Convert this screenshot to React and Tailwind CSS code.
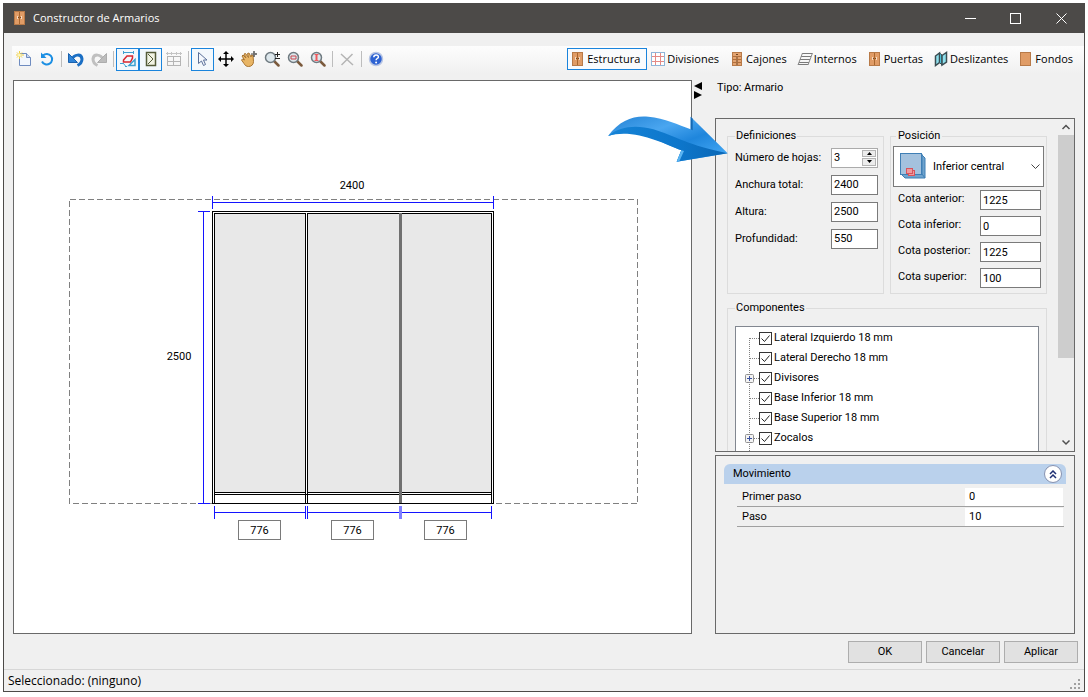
import { useState } from "react";

const tabs = [
  { id: "estructura", label: "Estructura", icon: WardrobeIcon },
  { id: "divisiones", label: "Divisiones", icon: GridIcon },
  { id: "cajones", label: "Cajones", icon: DrawersIcon },
  { id: "internos", label: "Internos", icon: ShelvesIcon },
  { id: "puertas", label: "Puertas", icon: WardrobeIcon },
  { id: "deslizantes", label: "Deslizantes", icon: SlidingIcon },
  { id: "fondos", label: "Fondos", icon: BackIcon },
];

const cotas = [
  { id: "anterior", label: "Cota anterior:", value: "1225" },
  { id: "inferior", label: "Cota inferior:", value: "0" },
  { id: "posterior", label: "Cota posterior:", value: "1225" },
  { id: "superior", label: "Cota superior:", value: "100" },
];

const componentes = [
  { label: "Lateral Izquierdo 18 mm" },
  { label: "Lateral Derecho 18 mm" },
  { label: "Divisores", expandable: true },
  { label: "Base Inferior 18 mm" },
  { label: "Base Superior 18 mm" },
  { label: "Zocalos", expandable: true },
];

/* ICONS */

function Icon({ children }) {
  return (
    <svg width="16" height="16" viewBox="0 0 16 16" fill="none" className="shrink-0">
      {children}
    </svg>
  );
}

function WardrobeIcon() {
  return (
    <Icon>
      <rect x="2.5" y="1.5" width="10" height="13" fill="#e09c66" stroke="#b87a48" />
      <path d="M7.500 2v12" stroke="#a9672f" />
      <path d="M5.500 6v3M9.500 6v3" stroke="#f4dcc4" />
      <path d="M6 7.500h3" stroke="#7d4a20" strokeDasharray="1 1" />
    </Icon>
  );
}

function GridIcon() {
  return (
    <Icon>
      <rect x="1.5" y="1.5" width="13" height="13" fill="#fff" stroke="#8fb6d9" />
      <path d="M5.500 2v12M10.500 2v12M2 5.500h12M2 10.500h12" stroke="#e58a86" />
    </Icon>
  );
}

function DrawersIcon() {
  return (
    <Icon>
      <rect x="3.5" y="1.5" width="9" height="13" fill="#e3a472" stroke="#b87a48" />
      <path d="M4 5.500h8M4 8.500h8M4 11.500h8" stroke="#b06f3c" />
      <path d="M7 3.500h2M7 7h2M7 10h2M7 13h2" stroke="#6d4422" />
    </Icon>
  );
}

function ShelvesIcon() {
  return (
    <Icon>
      <path d="M5 2.500h10M4 5.500h10M3 8.500h10M2 11.500h10M1 13.500h10" stroke="#7a7a7a" />
      <path d="M5.500 2L1 14M15.500 2L11 14" stroke="#8a8a8a" />
    </Icon>
  );
}

function SlidingIcon() {
  return (
    <Icon>
      <path d="M2.500 5l4-3v9.500l-4 3z" fill="#8fe0ee" stroke="#3b4d52" strokeWidth="1.500" />
      <path d="M6.500 2l2.500 2v10l-2.500-2.500z" fill="#4cbfd6" stroke="#3b4d52" />
      <path d="M9 4.500l4.500-3v9.500L9 14z" fill="#8fe0ee" stroke="#3b4d52" strokeWidth="1.500" />
    </Icon>
  );
}

function BackIcon() {
  return (
    <Icon>
      <rect x="2.500" y="1.500" width="10" height="13" fill="#e09c66" stroke="#b87a48" />
    </Icon>
  );
}

function NewIcon() {
  return (
    <Icon>
      <path d="M3.500 2.500h7l4 4v8h-11z" fill="#f3f7fd" stroke="#6f8cc0" />
      <path d="M10.500 2.500v4h4" fill="#c9d6ee" stroke="#6f8cc0" />
      <path d="M3.500 0v8M0 4h8M1 1.500l5 5M6 1.500l-5 5" stroke="#efcf45" />
      <circle cx="3.500" cy="4" r="1.500" fill="#fff8c0" />
    </Icon>
  );
}

function RefreshIcon() {
  return (
    <Icon>
      <path d="M4 4.500A5.300 5.300 0 1 1 3 10.500" stroke="#1c8fe3" strokeWidth="2" />
      <path d="M2 1.500V7h5.500z" fill="#1c8fe3" />
    </Icon>
  );
}

function UndoIcon() {
  return (
    <Icon>
      <path d="M4 8.500C6 3 13.500 2.500 14 8c0 2.500-1.500 5-4.500 6.500" stroke="#1b6fc4" strokeWidth="3" />
      <path d="M.5 2.500v9h9z" fill="#2f84d8" stroke="#1c62ad" />
    </Icon>
  );
}

function RedoIcon() {
  return (
    <Icon>
      <path d="M12 8.500C10 3 2.500 2.500 2 8c0 2.500 1.500 5 4.500 6.500" stroke="#c0c0c0" strokeWidth="3" />
      <path d="M15.500 2.500v9h-9z" fill="#bdbdbd" stroke="#adadad" />
    </Icon>
  );
}

function DimensionsIcon() {
  return (
    <Icon>
      <path d="M3.500 0v3M13.500 0v3M4 1.500h9" stroke="#3da0d0" />
      <path d="M7 5h5.500v2l-2 4H3.500V9z" stroke="#d8262f" strokeWidth="1.500" />
      <path d="M0 12.500h3M3 12l3 3.500M5 15.500h2" stroke="#3da0d0" />
      <path d="M9 14.500l6-6v6z" stroke="#3da0d0" strokeWidth="1.500" />
    </Icon>
  );
}

function DoorIcon() {
  return (
    <Icon>
      <rect x="3.500" y="1.500" width="9" height="13" fill="#f2f4e4" stroke="#555c3a" strokeWidth="1.500" />
      <path d="M5 3l5 5-5 5" stroke="#555c3a" />
    </Icon>
  );
}

function LayoutIcon() {
  return (
    <Icon>
      <path d="M0 2.500h16M1.500 1v3M5.500 1v3M10.500 1v3M14.500 1v3" stroke="#c4c4c4" />
      <rect x="1.500" y="5.500" width="13" height="9" stroke="#b4b4b4" />
      <path d="M7.500 5v10M2 10.500h12" stroke="#b4b4b4" />
    </Icon>
  );
}

function CursorIcon() {
  return (
    <Icon>
      <path
        d="M3.500 1.500v11l3-2.500 2 4.500 2-1-2-4.500h3.500z"
        fill="#f4f8fd"
        stroke="#5b7099"
      />
    </Icon>
  );
}

function MoveIcon() {
  return (
    <Icon>
      <path d="M8 2v12M2 8h12" stroke="#000" strokeWidth="1.500" />
      <path d="M8 0l3 3H5zM8 16l3-3H5zM0 8l3-3v6zM16 8l-3-3v6z" fill="#000" />
    </Icon>
  );
}

function HandIcon() {
  return (
    <Icon>
      <path
        d="M1 5l1-1 3 3-2-4 1.500-.5 3 4-1-4 1.500-.5 2 4 .5-2 1.500.5.5 6c0 3-2 5-5 5-2 0-3.500-1-4.500-3L.5 9l1-1 2 1z"
        fill="#e8b565"
        stroke="#a87432"
      />
      <path d="M13 0v6M10 3h6" stroke="#444" />
      <path d="M13 0l1 1.500h-2zM13 6l1-1.500h-2zM16 3l-1.500-1v2z" fill="#444" />
    </Icon>
  );
}

function Magnifier({ children }) {
  return (
    <Icon>
      <path d="M10 10l4.500 4.500" stroke="#7b5a3c" strokeWidth="2.500" strokeLinecap="round" />
      <circle cx="6.500" cy="6.500" r="5" fill="#dde7ec" stroke="#6f7a80" strokeWidth="1.500" />
      {children}
    </Icon>
  );
}

function ZoomIcon() {
  return (
    <Magnifier>
      <path d="M11 3.500h5M13.500 1v5M11 7.500h5" stroke="#222" />
    </Magnifier>
  );
}

function ZoomWindowIcon() {
  return (
    <Magnifier>
      <path d="M4 5h5v3H4z" stroke="#c8474e" />
    </Magnifier>
  );
}

function ZoomExtentsIcon() {
  return (
    <Magnifier>
      <path d="M6.500 3v7" stroke="#ef5a5e" strokeWidth="2" />
      <path d="M4.500 3.500h4M4.500 9.500h4" stroke="#ef5a5e" />
    </Magnifier>
  );
}

function DeleteIcon() {
  return (
    <Icon>
      <path d="M2 3l12 11M13.500 3L2.500 14" stroke="#b4b4b4" strokeWidth="1.500" />
    </Icon>
  );
}

function HelpIcon() {
  return (
    <Icon>
      <circle cx="8" cy="8" r="6.500" fill="#2d62d2" stroke="#b9c6e4" strokeWidth="1.500" />
      <path d="M5.800 6.200c0-3 4.600-2.800 4.600-.3 0 1.600-2.300 1.600-2.300 3.300" stroke="#fff" strokeWidth="1.500" />
      <circle cx="8.100" cy="11.500" r="1" fill="#fff" />
    </Icon>
  );
}

function PositionIcon() {
  return (
    <svg width="26" height="28" viewBox="0 0 26 28" fill="none">
      <path d="M1 22l4 4h20V6l-4-4z" fill="#6fa3cd" stroke="#3f7fb5" />
      <path d="M22 2v20H1M22 22l3 4" stroke="#3f7fb5" />
      <rect x=".5" y="1.500" width="21" height="21" fill="#a4c2de" stroke="#3f7fb5" />
      <rect x="8.500" y="18.500" width="6" height="5" fill="#ee9a9f" stroke="#d8535b" />
      <rect x="6.500" y="16.500" width="6" height="5" fill="#ee9a9f" stroke="#d8535b" />
    </svg>
  );
}

/* TITLE BAR */

function TitleBar() {
  return (
    <header className="flex h-[30px] shrink-0 items-center bg-[#4c4a48] pl-2 text-white">
      <WardrobeIcon />
      <h1 className="ml-[5px] flex-1 font-['Open_Sans',sans-serif] text-[11px]">
        Constructor de Armarios
      </h1>
      <button type="button" aria-label="Minimizar" className="flex h-full w-[45px] items-center justify-center">
        <svg width="11" height="11" viewBox="0 0 11 11" stroke="#fff">
          <path d="M0 5.500h11" />
        </svg>
      </button>
      <button type="button" aria-label="Maximizar" className="flex h-full w-[45px] items-center justify-center">
        <svg width="11" height="11" viewBox="0 0 11 11" fill="none" stroke="#fff">
          <rect x=".5" y=".5" width="10" height="10" />
        </svg>
      </button>
      <button type="button" aria-label="Cerrar" className="flex h-full w-[46px] items-center justify-center">
        <svg width="11" height="11" viewBox="0 0 11 11" stroke="#fff">
          <path d="M.5.5l10 10M10.500.5l-10 10" />
        </svg>
      </button>
    </header>
  );
}

/* TOOLBAR */

function ToolButton({ label, active, children }) {
  return (
    <button
      type="button"
      aria-label={label}
      title={label}
      className={
        active
          ? "flex h-[23px] w-[23px] items-center justify-center border border-[#1a84dc] bg-[#f3f8fc]"
          : "flex h-[23px] w-[23px] items-center justify-center"
      }
    >
      {children}
    </button>
  );
}

function Separator() {
  return (
    <span className="flex h-[23px] w-[6px] items-center justify-center">
      <span className="h-4 w-px bg-[#bdbdbd]" />
    </span>
  );
}

function Toolbar({ tab, onTab }) {
  return (
    <div className="mt-[13px] ml-2 flex h-7 shrink-0 items-center bg-linear-to-b from-[#fdfdfd] to-[#f0f0f0] pb-[2px]">
      <ToolButton label="Nuevo"><NewIcon /></ToolButton>
      <ToolButton label="Restablecer"><RefreshIcon /></ToolButton>
      <Separator />
      <ToolButton label="Deshacer"><UndoIcon /></ToolButton>
      <ToolButton label="Rehacer"><RedoIcon /></ToolButton>
      <Separator />
      <ToolButton label="Cotas" active><DimensionsIcon /></ToolButton>
      <ToolButton label="Ver puertas" active><DoorIcon /></ToolButton>
      <ToolButton label="Ver divisiones"><LayoutIcon /></ToolButton>
      <Separator />
      <ToolButton label="Seleccionar" active><CursorIcon /></ToolButton>
      <ToolButton label="Mover"><MoveIcon /></ToolButton>
      <ToolButton label="Desplazar"><HandIcon /></ToolButton>
      <ToolButton label="Zoom"><ZoomIcon /></ToolButton>
      <ToolButton label="Zoom ventana"><ZoomWindowIcon /></ToolButton>
      <ToolButton label="Zoom todo"><ZoomExtentsIcon /></ToolButton>
      <Separator />
      <ToolButton label="Eliminar"><DeleteIcon /></ToolButton>
      <Separator />
      <ToolButton label="Ayuda"><HelpIcon /></ToolButton>

      <nav className="mr-1 ml-auto flex font-['Open_Sans',sans-serif] text-[11px]">
        {tabs.map(({ id, label, icon: TabIcon }) => (
          <button
            key={id}
            type="button"
            onClick={() => onTab(id)}
            className={
              id === tab
                ? "flex h-[22px] items-center gap-px border border-[#1a84dc] bg-[#f9fbfd] pr-[6px] pl-[2px]"
                : "flex h-[22px] items-center gap-px border border-transparent pr-[6px] pl-[2px]"
            }
          >
            <TabIcon />
            {label}
          </button>
        ))}
      </nav>
    </div>
  );
}

/* DRAWING */

function Drawing() {
  return (
    <div className="relative h-[366px] w-[571px] shrink-0">
      <svg width="571" height="366" viewBox="0 0 571 366" fill="none" shapeRendering="crispEdges">
        <rect x="2.500" y="25.500" width="568" height="304" stroke="#808080" strokeDasharray="6 3" />

        <rect x="145.500" y="37.500" width="281" height="292" fill="#fff" stroke="#000" />
        <rect x="147.500" y="39.500" width="91" height="279" fill="#e8e8e8" stroke="#000" />
        <rect x="240.500" y="39.500" width="92" height="279" fill="#e8e8e8" stroke="#000" />
        <rect x="334.500" y="39.500" width="90" height="279" fill="#e8e8e8" stroke="#000" />
        <path d="M147 320.500h278" stroke="#000" />
        <path d="M147.500 318v11M238.500 318v11M240.500 318v11M424.500 318v11" stroke="#000" />
        <path d="M333.500 39v290" stroke="#707070" strokeWidth="3" />

        <g stroke="#1414ff">
          <path d="M145.500 22v13M426.500 22v13M145 28.500h282" />
          <path d="M131 37.500h12M131 329.500h12M136.500 37v292" />
          <path d="M147.500 332v13M238.500 332v13M147 338.500h92" />
          <path d="M240.500 332v13M332.500 332v13M240 338.500h93" />
          <path d="M334.500 332v13M424.500 332v13M334 338.500h91" />
        </g>
        <path d="M333.500 332v13" stroke="#8080ff" strokeWidth="3" />

        <g className="fill-black font-[Roboto,sans-serif] text-[11px]" textAnchor="middle">
          <text x="285" y="15">2400</text>
          <text x="112" y="186">2500</text>
        </g>
      </svg>

      <input aria-label="Ancho hoja 1" defaultValue="776" className="absolute top-[346px] left-[171px] h-5 w-[43px] border border-[#7a7a7a] bg-white text-center" />
      <input aria-label="Ancho hoja 2" defaultValue="776" className="absolute top-[346px] left-[264px] h-5 w-[43px] border border-[#7a7a7a] bg-white text-center" />
      <input aria-label="Ancho hoja 3" defaultValue="776" className="absolute top-[346px] left-[357px] h-5 w-[43px] border border-[#7a7a7a] bg-white text-center" />
    </div>
  );
}

/* SIDE PANEL */

function Definiciones() {
  const [hojas, setHojas] = useState(3);

  return (
    <fieldset className="h-[166px] min-w-0 border border-[#dcdcdc] pr-[5px] pl-[7px]">
      <legend className="px-px leading-4">Definiciones</legend>
      <div className="flex h-[27px] items-center justify-between">
        <label htmlFor="hojas">Número de hojas:</label>
        <div className="flex h-5 w-[47px] border border-[#ababab] bg-white p-px">
          <input
            id="hojas"
            value={hojas}
            onChange={(e) => setHojas(Number(e.target.value) || 0)}
            className="min-w-0 flex-1 pl-px"
          />
          <div className="flex w-[14px] flex-col gap-px">
            <button
              type="button"
              aria-label="Más hojas"
              onClick={() => setHojas(hojas + 1)}
              className="flex flex-1 items-center justify-center border border-[#b4b4b4] bg-[#ececec]"
            >
              <svg width="5" height="3" viewBox="0 0 5 3"><path d="M0 3h5L2.500 0z" /></svg>
            </button>
            <button
              type="button"
              aria-label="Menos hojas"
              onClick={() => setHojas(Math.max(1, hojas - 1))}
              className="flex flex-1 items-center justify-center border border-[#b4b4b4] bg-[#ececec]"
            >
              <svg width="5" height="3" viewBox="0 0 5 3"><path d="M0 0h5L2.500 3z" /></svg>
            </button>
          </div>
        </div>
      </div>
      <Field id="anchura" label="Anchura total:" value="2400" />
      <Field id="altura" label="Altura:" value="2500" />
      <Field id="profundidad" label="Profundidad:" value="550" />
    </fieldset>
  );
}

function Field({ id, label, value }) {
  return (
    <div className="flex h-[27px] items-center justify-between">
      <label htmlFor={id}>{label}</label>
      <input
        id={id}
        defaultValue={value}
        className="h-5 w-[47px] border border-[#7a7a7a] bg-white px-[2px]"
      />
    </div>
  );
}

function Posicion() {
  return (
    <fieldset className="h-[166px] min-w-0 border border-[#dcdcdc] px-[2px]">
      <legend className="ml-[3px] px-[2px] leading-4">Posición</legend>
      <div className="relative mt-[2px]">
        <select
          aria-label="Posición"
          className="h-[41px] w-full appearance-none border border-[#7a7a7a] bg-white pl-[39px]"
        >
          <option>Inferior central</option>
          <option>Inferior izquierda</option>
          <option>Inferior derecha</option>
        </select>
        <span className="pointer-events-none absolute top-[6px] left-[7px]">
          <PositionIcon />
        </span>
        <svg
          width="9"
          height="6"
          viewBox="0 0 9 6"
          fill="none"
          className="pointer-events-none absolute top-[18px] right-[4px]"
        >
          <path d="M.5.5l4 4 4-4" stroke="#444" />
        </svg>
      </div>
      {cotas.map((cota) => (
        <div key={cota.id} className="flex h-[26px] items-center justify-between pr-[3px] pl-[5px]">
          <label htmlFor={cota.id} className="pb-[2px]">{cota.label}</label>
          <input
            id={cota.id}
            defaultValue={cota.value}
            className="h-5 w-[61px] border border-[#7a7a7a] bg-white px-[2px]"
          />
        </div>
      ))}
    </fieldset>
  );
}

function TreeRow({ label, expandable, first }) {
  return (
    <li className="flex h-5 items-center">
      <svg width="23" height="20" viewBox="0 0 23 20" fill="none" className="shrink-0">
        <path d={first ? "M13.500 10v10" : "M13.500 0v20"} stroke="#808080" strokeDasharray="1 1" />
        <path d="M14 10.500h9" stroke="#808080" strokeDasharray="1 1" />
        {expandable && (
          <>
            <rect x="9.500" y="6.500" width="8" height="8" rx="1" fill="#f4f4f4" stroke="#919191" />
            <path d="M11 10.500h5M13.500 8v5" stroke="#3a51a0" />
          </>
        )}
      </svg>
      <label className="flex items-center gap-[2px] leading-5">
        <span className="relative block h-[13px] w-[13px]">
          <input
            type="checkbox"
            defaultChecked
            className="peer block h-[13px] w-[13px] appearance-none border border-[#333] bg-white"
          />
          <svg
            width="13"
            height="13"
            viewBox="0 0 13 13"
            fill="none"
            className="pointer-events-none invisible absolute inset-0 peer-checked:visible"
          >
            <path d="M2.500 6.500l3 3 5-6" stroke="#222" />
          </svg>
        </span>
        {label}
      </label>
    </li>
  );
}

function ScrollBar() {
  return (
    <div className="flex w-4 shrink-0 flex-col items-center bg-[#f0f0f0]">
      <svg width="16" height="16" viewBox="0 0 16 16" fill="none" className="shrink-0">
        <path d="M4.500 10L8 6.500l3.500 3.500" stroke="#505050" strokeWidth="1.500" />
      </svg>
      <div className="h-[223px] w-full bg-[#cdcdcd]" />
      <svg width="16" height="16" viewBox="0 0 16 16" fill="none" className="mt-auto shrink-0">
        <path d="M4.500 5.500L8 9l3.500-3.500" stroke="#505050" strokeWidth="1.500" />
      </svg>
    </div>
  );
}

function PropertyRow({ id, label, value }) {
  return (
    <div className="flex h-5 items-center border-b border-[#a0a0a0] pr-px">
      <label htmlFor={id} className="flex-1 pl-[5px]">{label}</label>
      <input id={id} defaultValue={value} className="h-[18px] w-[98px] bg-white pl-1" />
    </div>
  );
}

function CalloutArrow() {
  return (
    <svg
      width="120"
      height="48"
      viewBox="24 45 360 144"
      className="pointer-events-none absolute top-[35px] -left-[107px]"
    >
      <defs>
        <linearGradient id="arrowTop" x1="0" y1="0" x2="1" y2="1">
          <stop offset="0" stopColor="#2382d4" />
          <stop offset="0.35" stopColor="#4aa6f0" />
          <stop offset="0.6" stopColor="#1f86dc" />
          <stop offset="1" stopColor="#4db0fa" />
        </linearGradient>
        <linearGradient id="arrowBottom" x1="0" y1="0" x2="1" y2="0">
          <stop offset="0" stopColor="#1583d6" />
          <stop offset="0.6" stopColor="#0d76cb" />
          <stop offset="1" stopColor="#0a66b4" />
        </linearGradient>
      </defs>
      <path
        d="M24 108C60 60 100 46 145 50c50 5 90 24 127 38V50l111 110-153 25 14-34C190 130 100 78 24 108z"
        fill="url(#arrowTop)"
      />
      <path
        d="M24 108C60 78 110 74 160 88c60 18 110 50 223 72l-153 25 14-34C190 130 100 84 24 108z"
        fill="url(#arrowBottom)"
      />
      <path d="M272 50v38l6 3V56z" fill="#1468b3" />
      <path d="M230 185l14-34 8 2-14 31z" fill="#5bb4f2" />
    </svg>
  );
}

function SidePanel() {
  return (
    <aside className="relative flex w-[360px] shrink-0 flex-col">
      <p className="h-[38px] shrink-0 pl-[2px] leading-4">Tipo: Armario</p>

      <div className="flex h-[334px] shrink-0 border border-[#696969]">
        <div className="min-w-0 flex-1 overflow-hidden px-[11px] pt-[9px]">
          <div className="grid grid-cols-2 gap-[6px]">
            <Definiciones />
            <Posicion />
          </div>
          <fieldset className="mt-[6px] min-w-0 border border-[#dcdcdc] px-[7px] pb-2">
            <legend className="px-px leading-4">Componentes</legend>
            <ul className="mt-[10px] h-[180px] border border-[#828790] bg-white pt-px">
              {componentes.map((item, i) => (
                <TreeRow key={item.label} {...item} first={i === 0} />
              ))}
              <li aria-hidden="true">
                <svg width="23" height="20" viewBox="0 0 23 20" fill="none">
                  <path d="M13.500 0v20" stroke="#808080" strokeDasharray="1 1" />
                </svg>
              </li>
            </ul>
          </fieldset>
        </div>
        <ScrollBar />
      </div>

      <section className="mt-[3px] flex-1 border border-[#696969] px-2 pt-2">
        <div className="flex h-5 items-center justify-between rounded-t-md bg-[#bad1ec] pr-1 pl-[9px]">
          <h2>Movimiento</h2>
          <button
            type="button"
            aria-label="Contraer"
            className="flex h-[18px] w-[18px] items-center justify-center rounded-full border border-[#8792b0] bg-white"
          >
            <svg width="8" height="9" viewBox="0 0 8 9" fill="none">
              <path d="M1 4l3-3 3 3M1 8l3-3 3 3" stroke="#1f2f73" strokeWidth="1.500" />
            </svg>
          </button>
        </div>
        <div className="mr-[2px] ml-[13px] pt-[3px]">
          <PropertyRow id="primer-paso" label="Primer paso" value="0" />
          <PropertyRow id="paso" label="Paso" value="10" />
        </div>
      </section>

      <CalloutArrow />
    </aside>
  );
}

const App = () => {
  const [tab, setTab] = useState("estructura");

  return (
    <div className="h-screen bg-white px-[3px] pt-[3px] pb-[5px] font-[Roboto,'Liberation_Sans',sans-serif] text-[11px] leading-4 text-black">
      <div className="flex h-full flex-col border-x border-b border-[#4c4a48] bg-[#f0f0f0]">
        <TitleBar />
        <Toolbar tab={tab} onTab={setTab} />

        <main className="mt-[6px] flex min-h-0 flex-1 px-[9px]">
          <div className="flex min-w-0 flex-1 items-center justify-center overflow-hidden border border-[#696969] bg-white">
            <Drawing />
          </div>
          <div className="w-[23px] shrink-0 pt-[2px] pl-px">
            <button type="button" aria-label="Mover divisor" className="block">
              <svg width="10" height="18" viewBox="0 0 10 18">
                <path d="M9 0v8L1 4zM1 9v8l8-4z" />
              </svg>
            </button>
          </div>
          <SidePanel />
        </main>

        <div className="mt-[7px] flex shrink-0 justify-end gap-1 pr-[6px]">
          {["OK", "Cancelar", "Aplicar"].map((label) => (
            <button
              key={label}
              type="button"
              className="h-[22px] w-[74px] border border-[#adadad] bg-[#e1e1e1]"
            >
              {label}
            </button>
          ))}
        </div>

        <footer className="mt-[6px] flex h-[22px] shrink-0 items-center justify-between border-t border-[#d7d7d7] pl-1 font-['Open_Sans',sans-serif] text-xs">
          <span>Seleccionado: (ninguno)</span>
          <svg width="12" height="12" viewBox="0 0 12 12" fill="#a0a0a0" className="mt-2 mr-[2px]">
            <path d="M8 0h2v2H8zM4 4h2v2H4zM8 4h2v2H8zM0 8h2v2H0zM4 8h2v2H4zM8 8h2v2H8z" />
          </svg>
        </footer>
      </div>
    </div>
  );
};

export default App;
